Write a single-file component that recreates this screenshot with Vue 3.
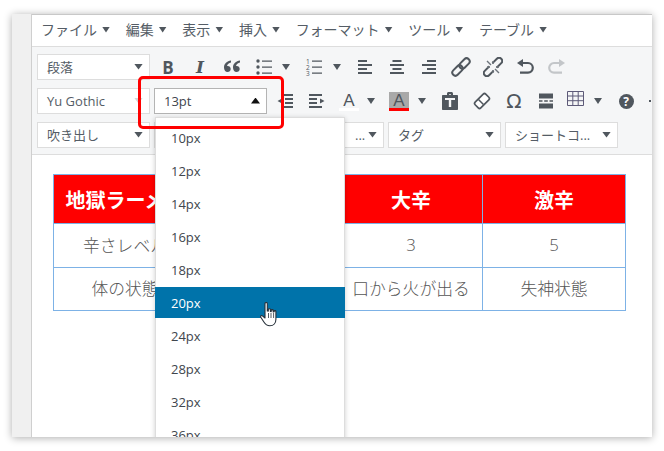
<template>
  <div class="page">
    <div class="window">
      <div class="gutter"></div>
      <div class="editor">
        <!-- menu bar -->
        <div class="menubar">
          <div v-for="m in menus" :key="m" class="menu-item">
            <span>{{ m }}</span>
            <i class="caret"></i>
          </div>
        </div>

        <!-- toolbar -->
        <div class="toolbar">
          <div class="row">
            <div class="select"><span>段落</span><i class="caret big"></i></div>
            <div class="btns">
              <div class="ib glyph bold">B</div>
              <div class="ib glyph ital">I</div>
              <div class="ib">
                <svg width="20" height="20" viewBox="0 0 20 20"><path d="M9 3.500C5 4 2 6.500 2 10.500c0 2.600 1.400 4.500 3.500 4.500 1.800 0 3.200-1.300 3.200-3.100S7.400 9 5.800 9c-.3 0-.6 0-.8.100C5.400 7.300 7 6 9 5.500zM18 3.500c-4 .5-7 3-7 7 0 2.600 1.400 4.500 3.500 4.500 1.800 0 3.200-1.300 3.200-3.100S16.400 9 14.800 9c-.3 0-.6 0-.8.100.4-1.800 2-3.100 4-3.600z" /></svg>
              </div>
              <div class="ib">
                <svg width="20" height="20" viewBox="0 0 20 20"><circle cx="4" cy="4" r="1.700" /><circle cx="4" cy="10" r="1.700" /><circle cx="4" cy="16" r="1.700" /><path d="M8 3.500h10v1.200H8zM8 9.500h10v1.200H8zM8 15.500h10v1.200H8z" /></svg>
              </div>
              <div class="car"><i class="caret"></i></div>
              <div class="ib">
                <svg width="20" height="20" viewBox="0 0 20 20"><text x="2" y="7" class="tiny">1</text><text x="2" y="13" class="tiny">2</text><text x="2" y="19" class="tiny">3</text><path d="M8 3.500h10v1.200H8zM8 9.500h10v1.200H8zM8 15.500h10v1.200H8z" /></svg>
              </div>
              <div class="car wide"><i class="caret"></i></div>
              <div class="ib">
                <svg width="20" height="20" viewBox="0 0 20 20"><path d="M3 3h9v2H3zM3 7h14v2H3zM3 11h9v2H3zM3 15h14v2H3z" /></svg>
              </div>
              <div class="ib">
                <svg width="20" height="20" viewBox="0 0 20 20"><path d="M5.500 3h9v2h-9zM3 7h14v2H3zM5.500 11h9v2h-9zM3 15h14v2H3z" /></svg>
              </div>
              <div class="ib">
                <svg width="20" height="20" viewBox="0 0 20 20"><path d="M8 3h9v2H8zM3 7h14v2H3zM8 11h9v2H8zM3 15h14v2H3z" /></svg>
              </div>
              <div class="ib">
                <svg width="20" height="20" viewBox="0 0 20 20" fill="none" stroke="#50575e" stroke-width="2"><rect x="-6" y="-3.100" width="12" height="6.200" rx="3.100" transform="translate(6.500 13.500) rotate(-45)" /><rect x="-6" y="-3.100" width="12" height="6.200" rx="3.100" transform="translate(13.500 6.500) rotate(-45)" /></svg>
              </div>
              <div class="ib">
                <svg width="20" height="20" viewBox="0 0 20 20" fill="none" stroke="#50575e" stroke-width="2"><rect x="-6" y="-3.100" width="12" height="6.200" rx="3.100" transform="translate(6 14) rotate(-45)" /><rect x="-6" y="-3.100" width="12" height="6.200" rx="3.100" transform="translate(14 6) rotate(-45)" /><path d="M4 4l12 12" stroke="#f5f6f7" stroke-width="4" /><path d="M10 4v3M10 13v3M4 10h3M13 10h3M4 4l4 4M12 12l4 4" stroke="#6d747b" stroke-width="1.400" /></svg>
              </div>
              <div class="ib">
                <svg width="20" height="20" viewBox="0 0 20 20" fill="none" stroke="#50575e" stroke-width="2.200"><path d="M7 6h6a4.800 4.800 0 0 1 0 9.600H5" /><path d="M8 2v8L2 6z" fill="#50575e" stroke="none" /></svg>
              </div>
              <div class="ib">
                <svg width="20" height="20" viewBox="0 0 20 20" fill="none" stroke="#c3c6c9" stroke-width="2.200"><path d="M13 6H7a4.800 4.800 0 0 0 0 9.600h8" /><path d="M12 2v8l6-4z" fill="#c3c6c9" stroke="none" /></svg>
              </div>
            </div>
          </div>

          <div class="row">
            <div class="select"><span>Yu Gothic</span><i class="caret big faint"></i></div>
            <div class="select open"><span>13pt</span><i class="caret big up"></i></div>
            <div class="btns">
              <div class="ib">
                <svg width="20" height="20" viewBox="0 0 20 20"><path d="M6 3h12v2H6zM10 7h8v2h-8zM10 11h8v2h-8zM6 15h12v2H6zM7 7.500v5L2.500 10z" /></svg>
              </div>
              <div class="ib">
                <svg width="20" height="20" viewBox="0 0 20 20"><path d="M2 3h13v2H2zM2 7h8v2H2zM2 11h8v2H2zM2 15h13v2H2zM13 7.500v5l4.500-2.500z" /></svg>
              </div>
              <div class="ib">
                <span class="letter">A</span><span class="under white"></span>
              </div>
              <div class="car"><i class="caret"></i></div>
              <div class="ib">
                <span class="letter shaded">A</span><span class="under red"></span>
              </div>
              <div class="car wide"><i class="caret"></i></div>
              <div class="ib">
                <svg width="20" height="20" viewBox="0 0 20 20"><path fill-rule="evenodd" d="M3 4h4V2.500C7 1.700 7.700 1 8.500 1h3c.8 0 1.500.7 1.500 1.500V4h4c.6 0 1 .4 1 1v13c0 .6-.4 1-1 1H3c-.6 0-1-.4-1-1V5c0-.6.400-1 1-1zm2 3v2h3.800v7h2.400V9H15V7zm4-3.800V4h2v-.8z" /></svg>
              </div>
              <div class="ib">
                <svg width="20" height="20" viewBox="0 0 20 20" fill="none"><rect x="-7.500" y="-4" width="15" height="8" rx="1.800" transform="translate(10 10) rotate(-45)" fill="#fff" stroke="#50575e" stroke-width="1.700" /><path d="M6.500 8.500 11.500 13.500" stroke="#50575e" stroke-width="1.500" /></svg>
              </div>
              <div class="ib glyph omega">Ω</div>
              <div class="ib">
                <svg width="20" height="20" viewBox="0 0 20 20"><path d="M3 2.500h14v5H3zM3 12.500h14v5H3zM3 9.200h3.500v1.500H3zM8.200 9.200h3.600v1.500H8.200zM13.500 9.200H17v1.500h-3.500z" /></svg>
              </div>
              <div class="ib short">
                <svg class="grid" width="17" height="15" viewBox="0 0 17 15" fill="none" stroke="#5d5a78"><path d="M.5.500h16v14H.5zM.5 5h16M.5 9.700h16M5.800.500v14M11.200.500v14" /></svg>
              </div>
              <div class="car mid"><i class="caret"></i></div>
              <div class="ib">
                <span class="help">?</span>
              </div>
              <i class="dot"></i>
            </div>
          </div>

          <div class="row">
            <div class="select"><span>吹き出し</span><i class="caret big"></i></div>
            <div class="select"><span></span><i class="caret big"></i></div>
            <div class="select"><span class="dots">...</span><i class="caret big"></i></div>
            <div class="select"><span>タグ</span><i class="caret big"></i></div>
            <div class="select"><span>ショートコ...</span><i class="caret big"></i></div>
          </div>
        </div>

        <!-- content -->
        <div class="content">
          <table class="spicy">
            <thead>
              <tr>
                <th>地獄ラーメン</th>
                <th></th>
                <th>大辛</th>
                <th>激辛</th>
              </tr>
            </thead>
            <tbody>
              <tr v-for="(r, i) in rows" :key="i">
                <td v-for="(c, j) in r" :key="j">{{ c }}</td>
              </tr>
            </tbody>
          </table>
        </div>
      </div>

      <!-- opened font size list -->
      <ul class="dropdown">
        <li v-for="s in sizes" :key="s" :class="{ active: s === '20px' }">{{ s }}</li>
      </ul>

      <!-- annotation + pointer -->
      <div class="annotation"></div>
      <svg class="hand" width="20" height="25" viewBox="0 0 20 25">
        <path d="M5 1.500c0-1.300 2.300-1.300 2.300 0V9l1 .1V7.600c0-1.100 2.100-1.100 2.100 0V9.500l.8.100V8.400c0-1 2-1 2 0v1.500l.8.100V9.400c0-1 1.900-1 1.900 0v7.800c0 3.800-2.300 6.600-6 6.600-3.200 0-4.600-1.500-6-3.800l-3.100-4.800c-.7-1.200.9-2.200 1.900-1.200L5 16z" fill="#fff" stroke="#27313a" stroke-width="1.100" stroke-linejoin="round" />
        <path d="M8.500 11v5M11 11v5M13.600 11v5" stroke="#27313a" stroke-width=".8" fill="none" />
      </svg>
    </div>
  </div>
</template>

<script setup>
const menus = ['ファイル', '編集', '表示', '挿入', 'フォーマット', 'ツール', 'テーブル']

const sizes = ['10px', '12px', '14px', '16px', '18px', '20px', '24px', '28px', '32px', '36px']

const rows = [
  ['辛さレベル', '', '3', '5'],
  ['体の状態', '', '口から火が出る', '失神状態']
]
</script>

<style>
html,
body {
  background: #fff;
}
</style>

<style scoped>
.page {
  width: 664px;
  height: 451px;
  padding: 14px 12px 0;
  box-sizing: border-box;
  overflow: hidden;
  font-family: "Open Sans", "Noto Sans CJK JP", sans-serif;
  color: #555d66;
}

.window {
  position: relative;
  display: flex;
  width: 640px;
  height: 423px;
  overflow: hidden;
  background: #fff;
  box-shadow: 0 1px 8px rgba(0, 0, 0, 0.32);
}

.gutter {
  width: 19px;
  flex: none;
  background: #f0f0f0;
  border-right: 1px solid #cfcfcf;
}

.editor {
  flex: 1;
  min-width: 0;
  border-top: 1px solid #c8c8c8;
}

.menubar {
  display: flex;
  gap: 15.670px;
  height: 29px;
  padding: 0 0 2px 9px;
  align-items: center;
  border-bottom: 1px solid #ddd;
  font-size: 14px;
  line-height: 29px;
}

.menu-item {
  display: flex;
  align-items: center;
  gap: 5px;
}

.caret {
  display: block;
  width: 8px;
  height: 6px;
  background: #50575e;
  clip-path: polygon(0 0, 100% 0, 50% 100%);
}

.caret.big {
  width: 9px;
}

.caret.faint {
  background: #d4d6d8;
}

.caret.up {
  background: #111;
  clip-path: polygon(50% 0, 100% 100%, 0 100%);
}

.toolbar {
  height: 108px;
  padding: 7px 0 0 5px;
  box-sizing: border-box;
  display: flex;
  flex-direction: column;
  gap: 8px;
  background: #f5f6f7;
  border-bottom: 1px solid #ddd;
  overflow: hidden;
}

.row {
  display: flex;
  gap: 4px;
  height: 26px;
}

.select {
  width: 113px;
  flex: none;
  box-sizing: border-box;
  display: flex;
  align-items: center;
  justify-content: space-between;
  padding: 0 6px 1px 9px;
  background: #fff;
  border: 1px solid #ddd;
  font-size: 13px;
}

.select.open {
  border-color: #b4b4b4;
  color: #40464d;
}

.dots {
  margin-left: 74px;
}

.btns {
  display: flex;
  flex: none;
  align-items: center;
  margin-left: -2px;
}

.ib {
  position: relative;
  width: 32px;
  height: 26px;
  flex: none;
  display: flex;
  align-items: center;
  justify-content: center;
}

.ib.short {
  width: 26px;
}

.ib svg:not([fill]) {
  fill: #50575e;
}

.glyph {
  color: #50575e;
}

.bold {
  font: 700 17px "Open Sans", sans-serif;
}

.ital {
  font: italic 700 17px "DejaVu Serif", serif;
}

.omega {
  font: 400 20px "DejaVu Sans", sans-serif;
}

.tiny {
  font: 6.500px "Open Sans", sans-serif;
  fill: #50575e;
}

.car {
  width: 18px;
  height: 26px;
  flex: none;
  display: flex;
  align-items: center;
  padding-left: 2px;
  box-sizing: border-box;
}

.car.wide {
  width: 19px;
  padding-left: 3px;
}

.car.mid {
  width: 22px;
  padding-left: 6px;
}

.letter {
  display: block;
  width: 20px;
  height: 18px;
  text-align: center;
  font: 400 17px/18px "Liberation Sans", sans-serif;
  color: #50575e;
}

.letter.shaded {
  background: #a9a9a9;
}

.under {
  position: absolute;
  left: 6px;
  top: 20px;
  width: 20px;
  height: 3px;
}

.under.white {
  background: #fff;
}

.under.red {
  background: #f00;
}

.grid {
  margin-top: -6px;
}

.help {
  width: 15px;
  height: 15px;
  border-radius: 50%;
  background: #50575e;
  color: #fff;
  font: 700 12px/15px "Open Sans", sans-serif;
  text-align: center;
}

.dot {
  width: 2px;
  height: 2px;
  margin-left: 7px;
  background: #50575e;
}

.content {
  padding: 19px 0 0 21px;
}

.spicy {
  width: 573px;
  table-layout: fixed;
  border-collapse: collapse;
  font-size: 16.800px;
  color: #555;
  text-align: center;
}

.spicy th,
.spicy td {
  border: 1px solid #7db2e6;
  padding: 0;
}

.spicy th {
  height: 48px;
  background: #f00;
  color: #fff;
  font-size: 20px;
  font-weight: 700;
}

.spicy td {
  height: 44px;
  padding-bottom: 2px;
  box-sizing: border-box;
  font-weight: 300;
}

.spicy tr:last-child td {
  height: 43px;
}

.dropdown {
  position: absolute;
  left: 143px;
  top: 103px;
  width: 190px;
  margin: 0;
  padding: 4px 0 0;
  list-style: none;
  box-sizing: border-box;
  background: #fff;
  border: 1px solid #ddd;
  border-width: 1px 1px 0;
  box-shadow: 0 1px 5px rgba(0, 0, 0, 0.2);
  font-size: 13px;
  color: #40464d;
}

.dropdown li {
  height: 31px;
  margin-bottom: 2px;
  padding-left: 15px;
  line-height: 33px;
}

.dropdown li.active {
  margin: 0 -1px 2px;
  padding-left: 16px;
  background: #0073aa;
  color: #fff;
}

.annotation {
  position: absolute;
  left: 126px;
  top: 62px;
  width: 146px;
  height: 53px;
  box-sizing: border-box;
  border: 3px solid #f00;
  border-radius: 5px;
}

.hand {
  position: absolute;
  left: 248px;
  top: 288px;
}
</style>
